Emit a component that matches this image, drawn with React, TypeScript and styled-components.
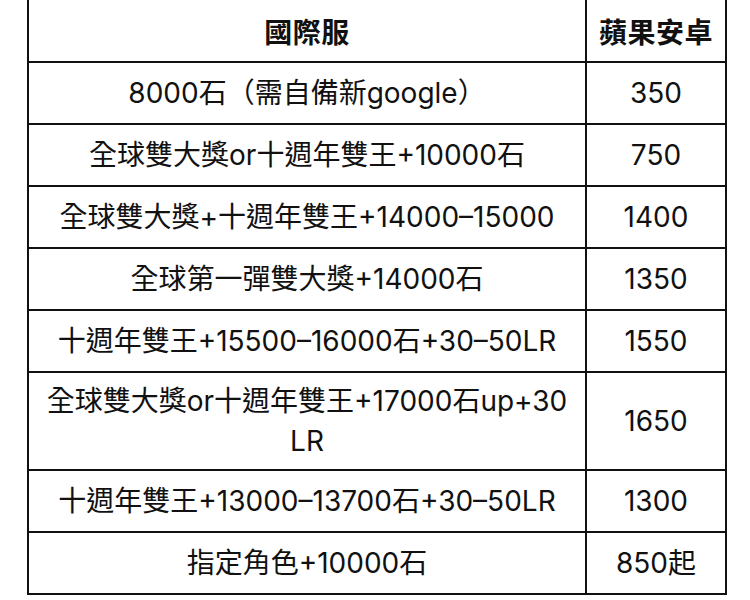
import React from 'react';
import styled, { createGlobalStyle } from 'styled-components';

const GlobalStyle = createGlobalStyle`
  html, body {
    margin: 0;
    padding: 0;
    background: #ffffff;
  }

  body {
    font-family: Inter, "Noto Sans CJK TC", "Noto Sans", sans-serif;
    color: #111111;
  }
`;

const Page = styled.div`
  width: 750px;
  height: 600px;
  overflow: hidden;
  padding-left: 27px;
  box-sizing: border-box;
`;

const PriceTable = styled.table`
  border-collapse: collapse;
  margin-top: -2px;
  width: 700px;
  table-layout: fixed;
`;

const HeadCell = styled.th<{ $wide?: boolean }>`
  width: ${(p) => (p.$wide ? '556px' : 'auto')};
  height: 61px;
  padding: 0;
  border: 2.5px solid #111111;
  font-size: 28px;
  font-weight: 700;
  text-align: center;
  vertical-align: middle;
  letter-spacing: 0.5px;
`;

const Cell = styled.td<{ $tall?: boolean }>`
  height: ${(p) => (p.$tall ? '96px' : '60px')};
  padding: 0 6px;
  border: 2.5px solid #111111;
  font-size: 28px;
  font-weight: 400;
  line-height: 40px;
  text-align: center;
  vertical-align: middle;
  white-space: nowrap;
  letter-spacing: 0;
`;

type Plan = {
  lines: string[];
  price: string;
};

const plans: Plan[] = [
  { lines: ['8000石（需自備新google）'], price: '350' },
  { lines: ['全球雙大獎or十週年雙王+10000石'], price: '750' },
  { lines: ['全球雙大獎+十週年雙王+14000–15000'], price: '1400' },
  { lines: ['全球第一彈雙大獎+14000石'], price: '1350' },
  { lines: ['十週年雙王+15500–16000石+30–50LR'], price: '1550' },
  { lines: ['全球雙大獎or十週年雙王+17000石up+30', 'LR'], price: '1650' },
  { lines: ['十週年雙王+13000–13700石+30–50LR'], price: '1300' },
  { lines: ['指定角色+10000石'], price: '850起' },
];

const App: React.FC = () => {
  return (
    <Page>
      <GlobalStyle />
      <PriceTable>
        <thead>
          <tr>
            <HeadCell $wide>國際服</HeadCell>
            <HeadCell>蘋果安卓</HeadCell>
          </tr>
        </thead>
        <tbody>
          {plans.map((plan) => (
            <tr key={plan.price}>
              <Cell $tall={plan.lines.length > 1}>
                {plan.lines.map((line, i) => (
                  <React.Fragment key={i}>
                    {i > 0 && <br />}
                    {line}
                  </React.Fragment>
                ))}
              </Cell>
              <Cell $tall={plan.lines.length > 1}>{plan.price}</Cell>
            </tr>
          ))}
        </tbody>
      </PriceTable>
    </Page>
  );
};

export default App;
